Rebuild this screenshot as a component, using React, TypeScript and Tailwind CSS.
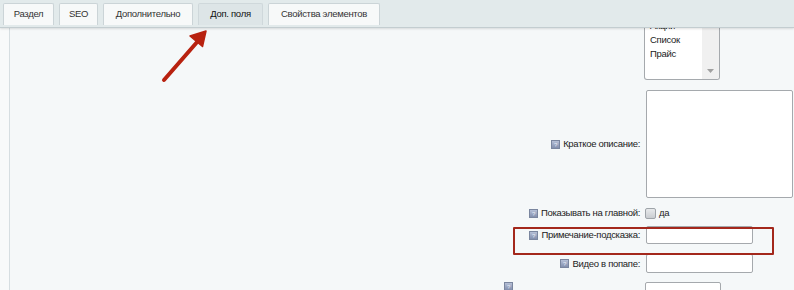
import React from "react";

const Help = () => (
  <svg width="9" height="9" viewBox="0 0 9 9" className="shrink-0">
    <defs>
      <linearGradient id="hg" x1="0" y1="0" x2="0" y2="1">
        <stop offset="0" stopColor="#b9c3d9" />
        <stop offset="1" stopColor="#7f8cab" />
      </linearGradient>
    </defs>
    <rect x="0.5" y="0.5" width="8" height="8" fill="url(#hg)" stroke="#7a869f" strokeWidth="1" />
    <text x="4.5" y="7" fontSize="6" textAnchor="middle" fill="#e8ecf5" fontFamily="Liberation Sans, sans-serif">?</text>
  </svg>
);

const Label = ({ text }: { text: string }) => (
  <div className="w-[631px] shrink-0 flex items-center justify-end gap-[3px] pr-[1px]">
    <Help />
    <span>{text}</span>
  </div>
);

const tabs = [
  { t: "Раздел", w: 51 },
  { t: "SEO", w: 39 },
  { t: "Дополнительно", w: 90 },
  { t: "Доп. поля", w: 65, active: true },
  { t: "Свойства элементов", w: 112 },
];

export default function App() {
  return (
    <div
      className="relative w-[794px] h-[290px] overflow-hidden bg-[#f5f8f9] text-[9.5px] tracking-[-0.3px] text-[#222]"
      style={{ fontFamily: '"Liberation Sans", Arial, sans-serif' }}
    >
      {/* header */}
      <div className="relative z-10 h-[28px] bg-[#e2eaeb] border-b border-[#c3cdd0] shadow-[0_1px_2px_rgba(0,0,0,0.12)] flex items-start pl-[3px] pt-[3px] gap-[5px]">
        {tabs.map((tb) => (
          <div
            key={tb.t}
            style={{ width: tb.w }}
            className={
              "h-[22px] flex items-center justify-center rounded-t-[2px] border border-b-0 " +
              (tb.active
                ? "bg-[#dde5e7] border-[#cfd8db] text-[#111]"
                : "bg-[#f7f9f9] border-[#cbd4d7] text-[#333]")
            }
          >
            {tb.t}
          </div>
        ))}
      </div>

      {/* content */}
      <div className="flex h-[262px]">
        <div className="w-[10px] shrink-0 bg-[#f8fafa] border-r border-[#d6dee1]" />
        <div className="flex flex-col">
          {/* select row */}
          <div className="flex h-[52px]">
            <div className="w-[634px] shrink-0" />
            <div className="w-[76px] h-[52px] bg-white border border-t-0 border-[#a5a9ad] rounded-b-[3px] flex overflow-hidden">
              <div className="flex-1 pl-[5px] mt-[-9px] leading-[14px]">
                <div>Акции</div>
                <div>Список</div>
                <div>Прайс</div>
              </div>
              <div className="w-[17px] bg-[#f0f0f0] flex items-end justify-center pb-[6px]">
                <svg width="7" height="4" viewBox="0 0 7 4">
                  <path d="M0 0 L7 0 L3.5 4 Z" fill="#a0a0a0" />
                </svg>
              </div>
            </div>
          </div>

          {/* textarea row */}
          <div className="flex mt-[10px] items-center">
            <Label text="Краткое описание:" />
            <div className="ml-[5px] w-[147px] h-[108px] bg-white border border-[#a5a9ad] rounded-[2px]" />
          </div>

          {/* checkbox row */}
          <div className="flex mt-[8px] h-[18px] items-center">
            <Label text="Показывать на главной:" />
            <div className="ml-[4px] flex items-center gap-[3px]">
              <div className="w-[11px] h-[11px] rounded-[2px] border border-[#9ea4a9] bg-gradient-to-b from-[#e8eaec] to-[#c9cdd1]" />
              <span>да</span>
            </div>
          </div>

          {/* note row */}
          <div className="flex mt-[6px] h-[19px] items-center">
            <Label text="Примечание-подсказка:" />
            <div className="ml-[5px] w-[107px] h-[18px] bg-white border border-[#a5a9ad] rounded-[2px]" />
          </div>

          {/* video row */}
          <div className="flex mt-[10px] h-[19px] items-center">
            <Label text="Видео в попапе:" />
            <div className="ml-[5px] w-[107px] h-[19px] bg-white border border-[#a5a9ad] rounded-[2px]" />
          </div>

          {/* partial next row */}
          <div className="flex mt-[9px] h-[19px] items-start">
            <div className="w-[631px] shrink-0 flex justify-end pr-[128px]">
              <Help />
            </div>
            <div className="ml-[4px] w-[76px] h-[19px] bg-white border border-[#a5a9ad] rounded-[2px]" />
          </div>
        </div>
      </div>

      {/* red highlight box */}
      <div className="absolute left-[513px] top-[227px] w-[261px] h-[28px] border-2 border-[#a3281c] rounded-[1px] pointer-events-none" />

      {/* arrow */}
      <svg className="absolute left-0 top-0 z-20 pointer-events-none" width="794" height="290">
        <line x1="164" y1="80" x2="198" y2="41" stroke="#b82210" strokeWidth="4" strokeLinecap="round" />
        <path d="M206 31 L202.5 46.5 L190 36 Z" fill="#b82210" stroke="#b82210" strokeWidth="1.5" strokeLinejoin="round" />
      </svg>
    </div>
  );
}
